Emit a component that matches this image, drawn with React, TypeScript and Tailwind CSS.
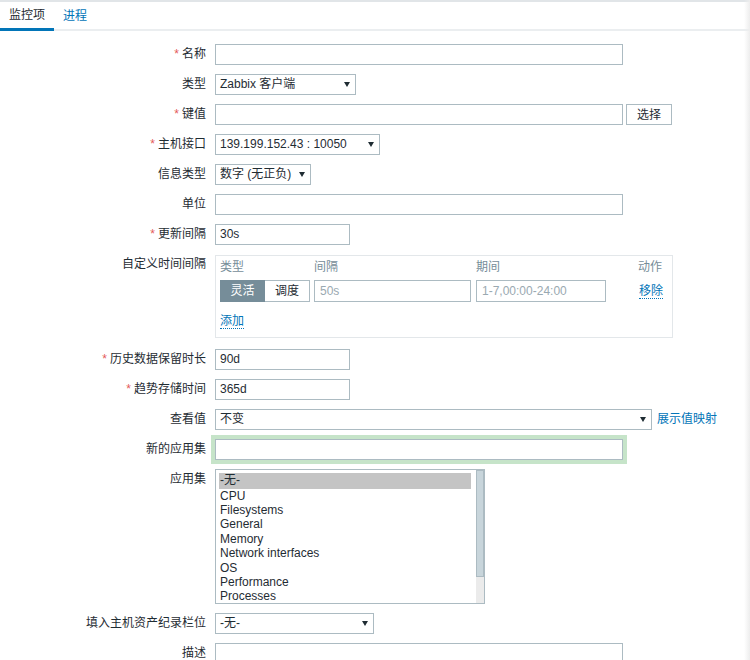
import type { ReactNode } from "react";

const font = "font-['Liberation_Sans','Noto_Sans_CJK_SC',sans-serif]";

function Arrow() {
    return (
        <svg width="6" height="5" viewBox="0 0 6 5" className="shrink-0">
            <path d="M0 0h6L3 5z" fill="#1f2c33" />
        </svg>
    );
}

interface RowProps {
    label: string;
    req?: boolean;
    children: ReactNode;
}

function Row({ label, req, children }: RowProps) {
    return (
        <div className="flex items-start">
            <div className="w-[206px] shrink-0 text-right leading-[21px] whitespace-nowrap">
                {req && <span className="mr-[3px] text-[#e45959]">*</span>}
                {label}
            </div>
            <div className="ml-[9px] flex items-start">{children}</div>
        </div>
    );
}

function TextBox({ w, value }: { w: string; value?: string }) {
    return (
        <div className={`${w} h-[21px] border border-[#acbbc2] bg-white pl-[4px] leading-[19px] text-[#1f2c33]`}>
            {value}
        </div>
    );
}

function Select({ w, value }: { w: string; value: string }) {
    return (
        <div className={`${w} flex h-[21px] items-center justify-between border border-[#acbbc2] bg-white pl-[4px] pr-[5px] text-[#1f2c33]`}>
            <span className="whitespace-nowrap leading-[19px]">{value}</span>
            <Arrow />
        </div>
    );
}

const apps = ["CPU", "Filesystems", "General", "Memory", "Network interfaces", "OS", "Performance", "Processes"];

export default function App() {
    return (
        <div className={`relative h-[660px] w-[750px] overflow-hidden bg-white text-[12px] text-[#1f2c33] ${font}`}>
            {/* tabs */}
            <div className="border-t-2 border-[#e1e5e8]">
                <div className="flex h-[29px] border-b-2 border-[#ebeef0]">
                    <div className="-mb-[2px] flex items-center border-b-[3px] border-[#0275b8] px-[9px] text-[#1f2c33]">
                        监控项
                    </div>
                    <div className="flex items-center px-[9px] text-[#0275b8]">进程</div>
                </div>
            </div>

            <div className="flex flex-col gap-[9px] pt-[13px]">
                <Row label="名称" req>
                    <TextBox w="w-[408px]" />
                </Row>
                <Row label="类型">
                    <Select w="w-[141px]" value="Zabbix 客户端" />
                </Row>
                <Row label="键值" req>
                    <TextBox w="w-[408px]" />
                    <div className="ml-[3px] flex h-[21px] w-[46px] items-center justify-center border border-[#acbbc2] bg-white">
                        选择
                    </div>
                </Row>
                <Row label="主机接口" req>
                    <Select w="w-[165px]" value="139.199.152.43 : 10050" />
                </Row>
                <Row label="信息类型">
                    <Select w="w-[96px]" value="数字 (无正负)" />
                </Row>
                <Row label="单位">
                    <TextBox w="w-[408px]" />
                </Row>
                <Row label="更新间隔" req>
                    <TextBox w="w-[135px]" value="30s" />
                </Row>
                <Row label="自定义时间间隔">
                    <div className="mb-[2px] mt-[1px] h-[83px] w-[458px] border border-[#e3e7ea] pl-[4px] pt-[3px]">
                        <div className="flex leading-[16px] text-[#768d99]">
                            <div className="w-[94px]">类型</div>
                            <div className="w-[162px]">间隔</div>
                            <div className="w-[162px]">期间</div>
                            <div>动作</div>
                        </div>
                        <div className="mt-[5px] flex items-center">
                            <div className="flex h-[22px] w-[90px]">
                                <div className="flex w-[45px] items-center justify-center border border-[#768d99] bg-[#768d99] text-white">
                                    灵活
                                </div>
                                <div className="flex w-[45px] items-center justify-center border border-l-0 border-[#acbbc2] bg-white">
                                    调度
                                </div>
                            </div>
                            <div className="ml-[4px] h-[22px] w-[157px] border border-[#acbbc2] pl-[5px] leading-[20px] text-[#9aa9b1]">
                                50s
                            </div>
                            <div className="ml-[5px] h-[22px] w-[130px] border border-[#acbbc2] pl-[5px] leading-[20px] text-[#9aa9b1]">
                                1-7,00:00-24:00
                            </div>
                            <span className="ml-[33px] border-b border-dotted border-[#0275b8] leading-[14px] text-[#0275b8]">
                                移除
                            </span>
                        </div>
                        <div className="mt-[10px]">
                            <span className="border-b border-dotted border-[#0275b8] leading-[14px] text-[#0275b8]">添加</span>
                        </div>
                    </div>
                </Row>
                <Row label="历史数据保留时长" req>
                    <TextBox w="w-[135px]" value="90d" />
                </Row>
                <Row label="趋势存储时间" req>
                    <TextBox w="w-[135px]" value="365d" />
                </Row>
                <Row label="查看值">
                    <Select w="w-[437px]" value="不变" />
                    <span className="ml-[5px] leading-[21px] text-[#0275b8]">展示值映射</span>
                </Row>
                <Row label="新的应用集">
                    <div className="h-[21px] w-[408px] border border-[#acbbc2] bg-white shadow-[0_0_0_4px_#c6e4c9]" />
                </Row>
                <Row label="应用集">
                    <div className="flex h-[135px] w-[270px] overflow-hidden border border-[#acbbc2] bg-white">
                        <div className="flex-1 overflow-hidden pl-[3px] pr-[5px] pt-[3px]">
                            <div className="bg-[#c4c4c4] pl-[1px] leading-[15.5px]">-无-</div>
                            {apps.map((a) => (
                                <div key={a} className="pl-[1px] leading-[14.4px]">
                                    {a}
                                </div>
                            ))}
                        </div>
                        <div className="flex w-[8px] flex-col bg-[#ebebeb]">
                            <div className="h-[107px] border border-[#acbbc2] bg-[#c8d5db]" />
                        </div>
                    </div>
                </Row>
                <Row label="填入主机资产纪录栏位">
                    <Select w="w-[159px]" value="-无-" />
                </Row>
                <Row label="描述">
                    <div className="h-[60px] w-[408px] border border-[#acbbc2] bg-white" />
                </Row>
            </div>

            <div className="pointer-events-none absolute right-0 top-0 h-full w-[6px] bg-gradient-to-l from-[#ededed] to-transparent" />
        </div>
    );
}
